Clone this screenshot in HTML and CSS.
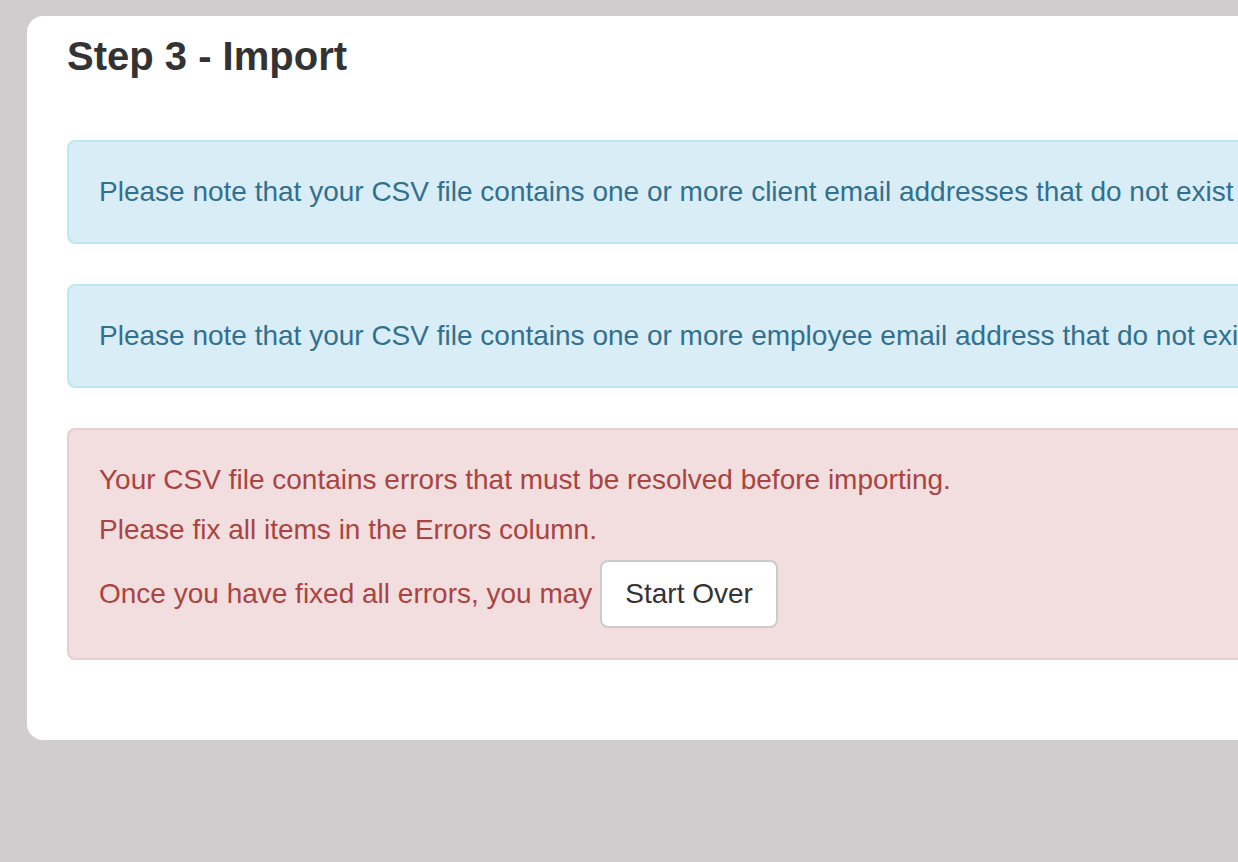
FILE: index.html
```html
<!DOCTYPE html>
<html>
<head>
<meta charset="utf-8">
<title>Step 3 - Import</title>
<link rel="stylesheet" href="styles.css">
</head>
<body>
<div class="card">
  <h3 class="title">Step 3 - Import</h3>
  <div class="alert alert-info">
    <p>Please note that your CSV file contains one or more client email addresses that do not exist in the system.</p>
  </div>
  <div class="alert alert-info">
    <p>Please note that your CSV file contains one or more employee email address that do not exist in the system.</p>
  </div>
  <div class="alert alert-danger">
    <p>Your CSV file contains errors that must be resolved before importing.</p>
    <p>Please fix all items in the Errors column.</p>
    <p class="last">Once you have fixed all errors, you may <button class="btn">Start Over</button></p>
  </div>
</div>
</body>
</html>
```
FILE: styles.css
```css
html, body {
  margin: 0;
  padding: 0;
  overflow: hidden;
  background: #cfcdce;
  font-family: "Liberation Sans", Arial, Helvetica, sans-serif;
}
body {
  padding: 16px 0 0 27px;
  height: 862px;
  box-sizing: border-box;
}
.card {
  width: 1700px;
  background: #ffffff;
  border-radius: 16px;
  padding: 18px 40px 40px 40px;
  box-sizing: border-box;
}
.title {
  margin: 0 0 62px 0;
  font-size: 40px;
  line-height: 44px;
  font-weight: bold;
  color: #333333;
}
.alert {
  border: 2px solid transparent;
  border-radius: 8px;
  padding: 30px;
  margin-bottom: 40px;
  font-size: 28px;
  line-height: 40px;
  white-space: nowrap;
}
.alert p {
  margin: 0 0 10px 0;
}
.alert p:last-child {
  margin-bottom: 0;
}
.alert-info {
  background: #d9edf7;
  border-color: #bce8f1;
  color: #31708f;
}
.alert-danger {
  background: #f2dede;
  border-color: #ebccd1;
  color: #a94442;
}
.alert p.last {
  display: flex;
  align-items: center;
  gap: 8px;
}
.btn {
  font-family: inherit;
  font-size: 28px;
  line-height: 40px;
  color: #333333;
  background: #ffffff;
  border: 2px solid #cccccc;
  border-radius: 8px;
  padding: 12px 23px;
  margin: 0;
  cursor: pointer;
}
```
